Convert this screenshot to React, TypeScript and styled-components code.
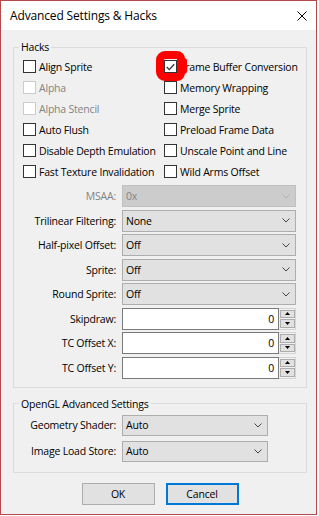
import React from 'react';
import styled, { createGlobalStyle } from 'styled-components';

const Global = createGlobalStyle`
  html, body { margin: 0; padding: 0; background: #ffffff; }
  body { font-family: "Open Sans", "Noto Sans", sans-serif; font-size: 10.5px; letter-spacing: -0.2px; color: #000; }
  * { box-sizing: border-box; }
`;

const Window = styled.div`
  width: 317px;
  height: 515px;
  border: 1px solid #b4484b;
  display: flex;
  flex-direction: column;
  background: #f0f0f0;
`;

const TitleBar = styled.div`
  height: 29px;
  background: #ffffff;
  display: flex;
  align-items: center;
  padding-left: 9px;
  padding-right: 9px;
  font-size: 12px;
  letter-spacing: -0.15px;
`;

const Title = styled.span`
  flex: 1;
`;

const CloseIcon = styled.svg`
  width: 10px;
  height: 10px;
  display: block;
`;

const Client = styled.div`
  flex: 1;
  padding: 10px 9px 0 12px;
  display: flex;
  flex-direction: column;
`;

const Group = styled.fieldset<{ $gap?: number }>`
  margin: ${(p) => p.$gap ?? 0}px 0 0 0;
  padding: 0;
  min-width: 0;
  border: 1px solid #dcdcdc;
`;

const Legend = styled.legend`
  margin-left: 5px;
  padding: 0 2px;
  line-height: 14px;
`;

const GroupBody = styled.div<{ $pt: number; $pb: number }>`
  padding: ${(p) => p.$pt}px 9px ${(p) => p.$pb}px 9px;
`;

const CheckGrid = styled.div`
  display: grid;
  grid-template-columns: 141px 1fr;
  grid-auto-rows: 21px;
`;

const CheckItem = styled.label<{ $disabled?: boolean }>`
  display: flex;
  align-items: center;
  gap: 3px;
  white-space: nowrap;
  color: ${(p) => (p.$disabled ? '#838383' : '#000')};
`;

const BoxWrap = styled.span`
  position: relative;
  display: block;
  width: 13px;
  height: 13px;
  flex: none;
`;

const Box = styled.span<{ $disabled?: boolean }>`
  display: flex;
  align-items: center;
  justify-content: center;
  width: 13px;
  height: 13px;
  border: 1px solid ${(p) => (p.$disabled ? '#cccccc' : '#333333')};
  background: #ffffff;
`;

const Marker = styled.span`
  position: absolute;
  left: -8px;
  top: -9px;
  width: 29px;
  height: 30px;
  border: 8px solid #ff0000;
  border-radius: 9px 8px 8px 9px;
  z-index: 2;
`;

const MarkerOverText = styled.span`
  position: absolute;
  left: 20px;
  top: -2px;
  width: 3px;
  height: 16px;
  background: #ff0000;
  border-radius: 0 3px 3px 0;
  z-index: 2;
`;

const SettingGrid = styled.div<{ $field: number; $mt: number; $gap: number; $row: number }>`
  display: grid;
  grid-template-columns: 93px ${(p) => p.$field}px;
  grid-auto-rows: ${(p) => p.$row}px;
  column-gap: 6px;
  row-gap: ${(p) => p.$gap}px;
  margin-top: ${(p) => p.$mt}px;
  align-items: stretch;
`;

const FieldLabel = styled.span<{ $disabled?: boolean }>`
  display: flex;
  align-items: center;
  justify-content: flex-end;
  white-space: nowrap;
  color: ${(p) => (p.$disabled ? '#838383' : '#000')};
`;

const Combo = styled.div<{ $disabled?: boolean }>`
  display: flex;
  align-items: center;
  padding: 0 5px 0 3px;
  border: 1px solid ${(p) => (p.$disabled ? '#bfbfbf' : '#adadad')};
  background: ${(p) => (p.$disabled ? '#cccccc' : '#e1e1e1')};
  color: ${(p) => (p.$disabled ? '#838383' : '#000')};
`;

const ComboText = styled.span`
  flex: 1;
`;

const Chevron = styled.svg`
  width: 8px;
  height: 5px;
  display: block;
`;

const Spin = styled.div`
  display: flex;
`;

const Edit = styled.div`
  flex: 1;
  display: flex;
  align-items: center;
  justify-content: flex-end;
  padding-right: 4px;
  border: 1px solid #7a7a7a;
  background: #ffffff;
`;

const SpinButtons = styled.div`
  width: 17px;
  display: flex;
  flex-direction: column;
  gap: 1px;
  padding: 1px 0 1px 1px;
  border: 1px solid #d4d4d4;
  border-left: none;
  background: #f0f0f0;
`;

const SpinButton = styled.div`
  flex: 1;
  display: flex;
  align-items: center;
  justify-content: center;
  border: 1px solid #adadad;
  background: #e1e1e1;
`;

const Arrow = styled.svg`
  width: 5px;
  height: 3px;
  display: block;
`;

const ButtonRow = styled.div`
  display: flex;
  justify-content: center;
  gap: 11px;
  margin-top: 10px;
`;

const Button = styled.div<{ $default?: boolean }>`
  width: 73px;
  height: 22px;
  display: flex;
  align-items: center;
  justify-content: center;
  border: ${(p) => (p.$default ? '2px solid #0078d7' : '1px solid #adadad')};
  background: #e1e1e1;
`;

const Check = () => (
  <svg width="9" height="8" viewBox="0 0 9 8">
    <polyline points="0.8,4 3.3,6.6 8.2,1.2" fill="none" stroke="#333" strokeWidth="1.3" />
  </svg>
);

const ChevronIcon = ({ color }: { color: string }) => (
  <Chevron viewBox="0 0 8 5">
    <polyline points="0.5,0.5 4,4 7.5,0.5" fill="none" stroke={color} strokeWidth="1" />
  </Chevron>
);

type CB = { label: string; disabled?: boolean; checked?: boolean; marked?: boolean };

const CheckBox = ({ label, disabled, checked, marked }: CB) => (
  <CheckItem $disabled={disabled}>
    <BoxWrap>
      <Box $disabled={disabled}>{checked && <Check />}</Box>
      {marked && <Marker />}
      {marked && <MarkerOverText />}
    </BoxWrap>
    <span>{label}</span>
  </CheckItem>
);

const SelectField = ({ value, disabled }: { value: string; disabled?: boolean }) => (
  <Combo $disabled={disabled}>
    <ComboText>{value}</ComboText>
    <ChevronIcon color={disabled ? '#b0b0b0' : '#444'} />
  </Combo>
);

const SpinField = ({ value }: { value: string }) => (
  <Spin>
    <Edit>{value}</Edit>
    <SpinButtons>
      <SpinButton>
        <Arrow viewBox="0 0 5 3"><polygon points="0,3 5,3 2.5,0" fill="#000" /></Arrow>
      </SpinButton>
      <SpinButton>
        <Arrow viewBox="0 0 5 3"><polygon points="0,0 5,0 2.5,3" fill="#000" /></Arrow>
      </SpinButton>
    </SpinButtons>
  </Spin>
);

const checks: CB[] = [
  { label: 'Align Sprite' },
  { label: 'Frame Buffer Conversion', checked: true, marked: true },
  { label: 'Alpha', disabled: true },
  { label: 'Memory Wrapping' },
  { label: 'Alpha Stencil', disabled: true },
  { label: 'Merge Sprite' },
  { label: 'Auto Flush' },
  { label: 'Preload Frame Data' },
  { label: 'Disable Depth Emulation' },
  { label: 'Unscale Point and Line' },
  { label: 'Fast Texture Invalidation' },
  { label: 'Wild Arms Offset' },
];

const combos = [
  { label: 'MSAA:', value: '0x', disabled: true },
  { label: 'Trilinear Filtering:', value: 'None' },
  { label: 'Half-pixel Offset:', value: 'Off' },
  { label: 'Sprite:', value: 'Off' },
  { label: 'Round Sprite:', value: 'Off' },
];

const spins = ['Skipdraw:', 'TC Offset X:', 'TC Offset Y:'];

export default function App() {
  return (
    <>
      <Global />
      <Window>
        <TitleBar>
          <Title>Advanced Settings &amp; Hacks</Title>
          <CloseIcon viewBox="0 0 10 10">
            <line x1="0.5" y1="0.5" x2="9.5" y2="9.5" stroke="#000" strokeWidth="1" />
            <line x1="9.5" y1="0.5" x2="0.5" y2="9.5" stroke="#000" strokeWidth="1" />
          </CloseIcon>
        </TitleBar>
        <Client>
          <Group>
            <Legend>Hacks</Legend>
            <GroupBody $pt={2} $pb={8}>
              <CheckGrid>
                {checks.map((c) => (
                  <CheckBox key={c.label} {...c} />
                ))}
              </CheckGrid>
              <SettingGrid $field={174} $mt={3} $gap={2.5} $row={22}>
                {combos.map((c) => (
                  <React.Fragment key={c.label}>
                    <FieldLabel $disabled={c.disabled}>{c.label}</FieldLabel>
                    <SelectField value={c.value} disabled={c.disabled} />
                  </React.Fragment>
                ))}
                {spins.map((s) => (
                  <React.Fragment key={s}>
                    <FieldLabel>{s}</FieldLabel>
                    <SpinField value="0" />
                  </React.Fragment>
                ))}
              </SettingGrid>
            </GroupBody>
          </Group>
          <Group $gap={9}>
            <Legend>OpenGL Advanced Settings</Legend>
            <GroupBody $pt={4} $pb={10}>
              <SettingGrid $field={146} $mt={0} $gap={5} $row={21}>
                <FieldLabel>Geometry Shader:</FieldLabel>
                <SelectField value="Auto" />
                <FieldLabel>Image Load Store:</FieldLabel>
                <SelectField value="Auto" />
              </SettingGrid>
            </GroupBody>
          </Group>
          <ButtonRow>
            <Button>OK</Button>
            <Button $default>Cancel</Button>
          </ButtonRow>
        </Client>
      </Window>
    </>
  );
}
